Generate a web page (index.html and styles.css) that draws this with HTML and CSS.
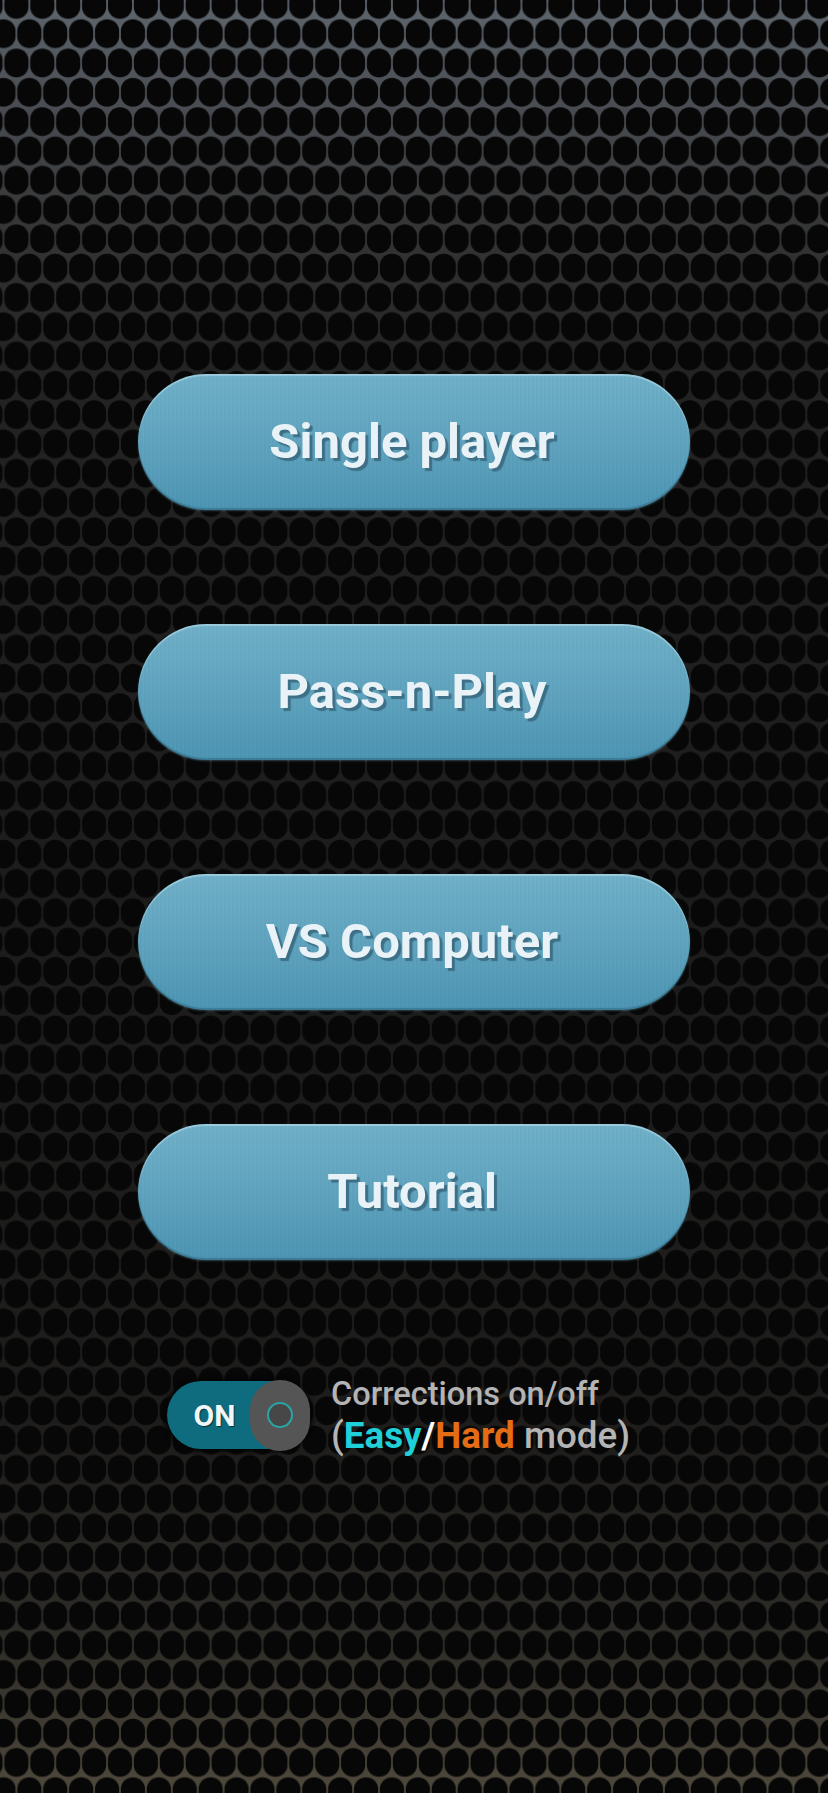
FILE: index.html
```html
<!DOCTYPE html>
<html lang="en">
<head>
    <meta charset="UTF-8">
    <meta name="viewport" content="width=device-width, initial-scale=1.0">
    <title>Game menu</title>
    <link rel="stylesheet" href="styles.css">
</head>
<body>
    <!-- honeycomb backdrop: the gradient shows through the gaps between the cells -->
    <svg class="backdrop" width="828" height="1793" aria-hidden="true">
        <defs>
            <linearGradient id="mesh" x1="0" y1="0" x2="0" y2="1">
                <stop offset="0" stop-color="#5e666e"/>
                <stop offset="0.05" stop-color="#4c5056"/>
                <stop offset="0.12" stop-color="#363738"/>
                <stop offset="0.2" stop-color="#232323"/>
                <stop offset="0.5" stop-color="#1c1c1c"/>
                <stop offset="0.8" stop-color="#1e1d1b"/>
                <stop offset="0.92" stop-color="#2f2d28"/>
                <stop offset="1" stop-color="#4f493c"/>
            </linearGradient>
            <path id="cell" d="M0-14.4C7-14.4 12.1-9 12.1-3V3C12.1 9 7 14.4 0 14.4C-7 14.4-12.1 9-12.1 3V-3C-12.1-9-7-14.4 0-14.4Z" fill="#070707"/>
            <pattern id="cells" x="3.45" y="-10.25" width="25.9" height="58.6" patternUnits="userSpaceOnUse">
                <use href="#cell" x="12.95" y="14.65"/>
                <use href="#cell" x="0" y="43.95"/>
                <use href="#cell" x="25.9" y="43.95"/>
            </pattern>
        </defs>
        <g class="mesh">
            <rect width="828" height="1793" fill="url(#mesh)"/>
            <rect width="828" height="1793" fill="url(#cells)"/>
        </g>
    </svg>

    <div class="container">
        <div class="menu">
            <button class="menu-btn">Single player</button>
            <button class="menu-btn">Pass-n-Play</button>
            <button class="menu-btn">VS Computer</button>
            <button class="menu-btn">Tutorial</button>
        </div>

        <div class="corrections">
            <div class="toggle">
                <span class="toggle-label">ON</span>
                <span class="toggle-knob"><span class="toggle-ring"></span></span>
            </div>
            <div class="corrections-text">
                <div class="line-top">Corrections on/off</div>
                <div class="line-bottom">(<span class="easy">Easy</span><span class="slash">/</span><span class="hard">Hard</span> mode)</div>
            </div>
        </div>
    </div>
</body>
</html>
```

FILE: styles.css
```css
* {
    margin: 0;
    padding: 0;
    box-sizing: border-box;
}

html, body {
    width: 828px;
    height: 1793px;
    overflow: hidden;
}

body {
    position: relative;
    background-color: #070707;
    font-family: Roboto, 'Liberation Sans', sans-serif;
}

.backdrop {
    position: absolute;
    top: 0;
    left: 0;
}

.mesh {
    filter: blur(0.6px);
}

.container {
    position: relative;
    display: flex;
    flex-direction: column;
    padding-top: 374px;
}

.menu {
    display: flex;
    flex-direction: column;
    gap: 114px;
    padding: 0 138px;
}

.menu-btn {
    width: 552px;
    height: 136px;
    padding-right: 4px;
    padding-bottom: 2px;
    border: none;
    border-radius: 68px;
    background:
        repeating-linear-gradient(90deg, rgba(255, 255, 255, 0.015) 0 2px, rgba(0, 0, 0, 0.015) 2px 4px),
        linear-gradient(180deg, #6fb0c8 0%, #5fa3be 50%, #4b94b3 100%);
    box-shadow: inset 0 2px 1px #9ccbdc, inset 0 -2px 1px #3b7b95, 0 1px 2px rgba(120, 170, 190, 0.35);
    color: #e9f2f6;
    font-family: Roboto, 'Liberation Sans', sans-serif;
    font-size: 49px;
    font-weight: 700;
    text-shadow: 3px 3px 1px #3d6f86;
}

.corrections {
    display: flex;
    align-items: center;
    gap: 21px;
    margin-top: 113px;
    padding-left: 167px;
}

.toggle {
    display: flex;
    align-items: center;
    width: 143px;
    height: 68px;
    border-radius: 34px;
    background-color: #0f6b7e;
    box-shadow: 0 0 4px 3px #050505;
}

.toggle-label {
    width: 83px;
    padding-left: 12px;
    text-align: center;
    color: #f2f6f7;
    font-size: 30px;
    font-weight: 700;
    text-shadow: 1px 1px 1px #06343e;
}

.toggle-knob {
    display: flex;
    align-items: center;
    justify-content: center;
    width: 60px;
    height: 71px;
    border-radius: 30px;
    background-color: #555555;
}

.toggle-ring {
    width: 26px;
    height: 26px;
    border: 2.5px solid #28a5a6;
    border-radius: 50%;
    background-color: #474747;
}

.corrections-text {
    color: #b4b4b4;
    font-weight: 500;
    line-height: 42px;
}

.line-top {
    font-size: 32.5px;
}

.line-bottom {
    font-size: 36.8px;
}

.easy {
    color: #1fd0d8;
    font-weight: 700;
}

.slash {
    color: #ffffff;
    font-weight: 700;
}

.hard {
    color: #e36c14;
    font-weight: 700;
}
```
